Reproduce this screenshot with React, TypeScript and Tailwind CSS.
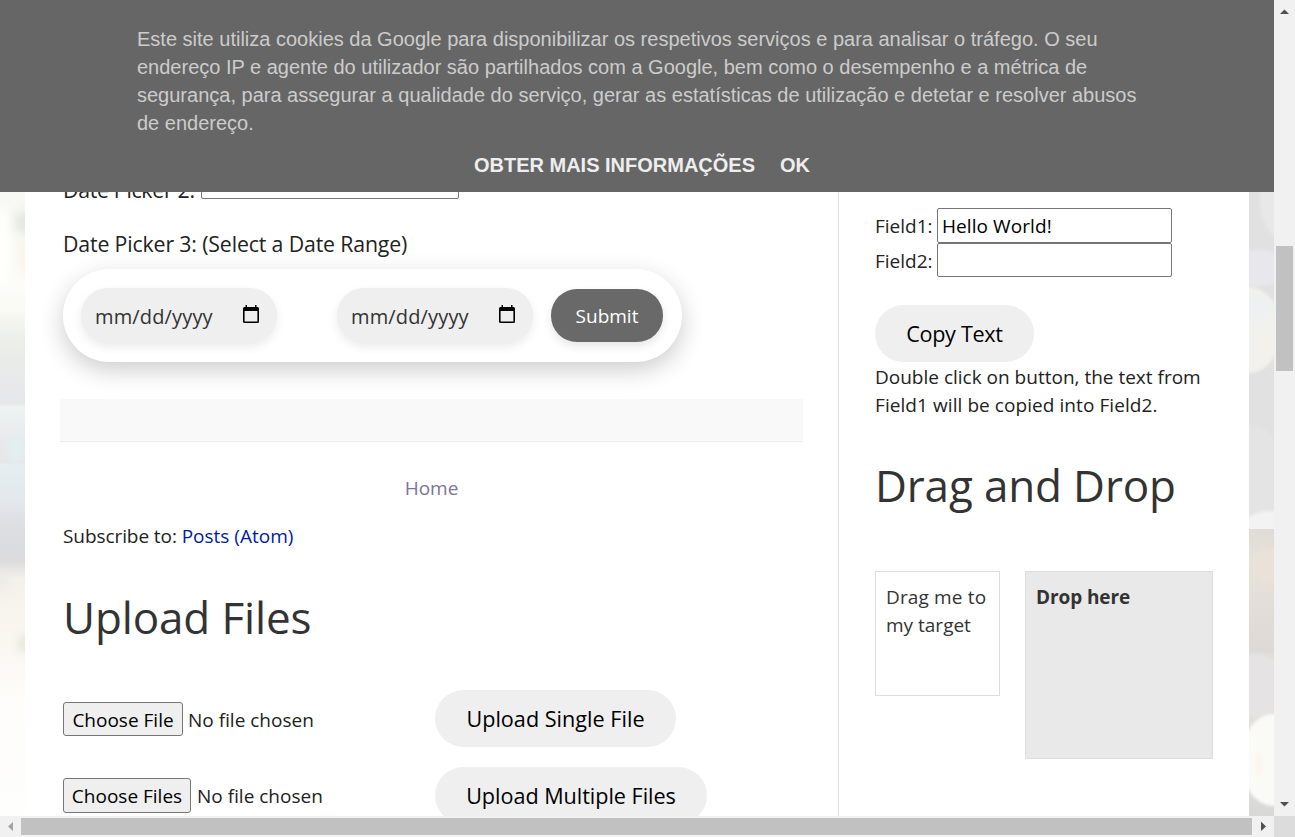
import React from 'react';

const SANS = "font-['Open_Sans','Noto_Sans',sans-serif]";

function CalendarIcon() {
  return (
    <svg width="16" height="18" viewBox="0 0 16 18" fill="none">
      <path d="M2.500 0H4v2h8V0h1.500v2H14.500Q16 2 16 3.500v13q0 1.500-1.500 1.500h-13Q0 18 0 16.500v-13Q0 2 1.500 2h1z M1.600 6v10.400h12.800V6z" fill="#000" fillRule="evenodd" />
    </svg>
  );
}

function DateField() {
  return (
    <div className="flex h-[55px] w-[196px] items-center justify-between rounded-[27px] bg-[#efefef] pr-[18px] pl-[14px] shadow-[0_4px_10px_rgba(0,0,0,0.08)]">
      <span className="pt-[2px] text-[20px] tracking-[0.15px] text-[#333]">mm/dd/yyyy</span>
      <span className="-mt-1">
        <CalendarIcon />
      </span>
    </div>
  );
}

function PillButton({ className, children }: { className: string; children: React.ReactNode }) {
  return (
    <button className={`flex h-[57px] items-center justify-center rounded-full bg-[#efefef] pt-[2px] text-[21.6px] text-black ${className}`}>
      {children}
    </button>
  );
}

function FileButton({ className, children }: { className: string; children: React.ReactNode }) {
  return (
    <button className={`flex items-center justify-center rounded-[3px] border border-[#767676] bg-[#efefef] pt-[2px] text-[19px] whitespace-nowrap text-black ${className}`}>
      {children}
    </button>
  );
}

function LeftBackdrop() {
  return (
    <svg className="h-full w-[25px] shrink-0" viewBox="0 0 25 624" preserveAspectRatio="none">
      <defs>
        <linearGradient id="leftBase" x1="0" y1="0" x2="0" y2="1">
          <stop offset="0" stopColor="#f8f9f5" />
          <stop offset="0.06" stopColor="#f7f8f2" />
          <stop offset="0.15" stopColor="#fcfcf8" />
          <stop offset="0.19" stopColor="#f9faf3" />
          <stop offset="0.23" stopColor="#edefea" />
          <stop offset="0.27" stopColor="#e9ebe8" />
          <stop offset="0.32" stopColor="#e8e8eb" />
          <stop offset="0.338" stopColor="#e4e8e8" />
          <stop offset="0.345" stopColor="#edf3f2" />
          <stop offset="0.4" stopColor="#e9e9eb" />
          <stop offset="0.434" stopColor="#e7e6e9" />
          <stop offset="0.436" stopColor="#e5eef1" />
          <stop offset="0.5" stopColor="#e2e7eb" />
          <stop offset="0.53" stopColor="#dddfe3" />
          <stop offset="0.59" stopColor="#dbdbdd" />
          <stop offset="0.62" stopColor="#f3f1eb" />
          <stop offset="0.7" stopColor="#faf5ef" />
          <stop offset="0.8" stopColor="#fdfcf9" />
          <stop offset="1" stopColor="#fefefd" />
        </linearGradient>
        <filter id="leftSoft" filterUnits="userSpaceOnUse" x="-30" y="-30" width="90" height="690">
          <feGaussianBlur stdDeviation="5" />
        </filter>
      </defs>
      <rect width="25" height="624" fill="url(#leftBase)" />
      <g filter="url(#leftSoft)">
        <ellipse cx="26" cy="30" rx="12" ry="12" fill="#e5e8e1" />
        <ellipse cx="26" cy="66" rx="5" ry="18" fill="#fdf2e8" />
        <ellipse cx="2" cy="55" rx="9" ry="40" fill="#fffffc" />
        <ellipse cx="16" cy="258" rx="8" ry="14" fill="#dff0f1" />
        <ellipse cx="2" cy="390" rx="5" ry="10" fill="#e9eae7" />
        <ellipse cx="26" cy="452" rx="9" ry="9" fill="#e4e9d8" />
      </g>
    </svg>
  );
}

function RightBackdrop() {
  return (
    <svg className="h-full w-[25px] shrink-0" viewBox="0 0 25 624" preserveAspectRatio="none">
      <defs>
        <linearGradient id="rightLow" x1="0" y1="0" x2="0" y2="1">
          <stop offset="0" stopColor="#dfdbd6" />
          <stop offset="0.12" stopColor="#e8e2da" />
          <stop offset="0.42" stopColor="#ded9d5" />
          <stop offset="0.46" stopColor="#e4e2df" />
          <stop offset="0.7" stopColor="#e2dfdb" />
          <stop offset="1" stopColor="#d8d9d7" />
        </linearGradient>
        <filter id="rightSoft" filterUnits="userSpaceOnUse" x="-40" y="-50" width="110" height="720">
          <feGaussianBlur stdDeviation="1.8" />
        </filter>
        <clipPath id="rightTop">
          <rect width="25" height="337" />
        </clipPath>
        <clipPath id="rightBottom">
          <rect y="337" width="25" height="287" />
        </clipPath>
      </defs>
      <rect width="25" height="337" fill="#e1e1e1" />
      <g clipPath="url(#rightTop)">
        <g filter="url(#rightSoft)">
          <ellipse cx="33" cy="8" rx="22" ry="38" fill="#e8e8e8" />
          <ellipse cx="8" cy="76" rx="32" ry="18" fill="#e8e8ec" />
          <ellipse cx="0" cy="138" rx="32" ry="43" fill="#f1f1ed" />
          <ellipse cx="10" cy="116" rx="13" ry="12" fill="#eff0f1" />
          <ellipse cx="14" cy="156" rx="8" ry="10" fill="#f4f1eb" />
          <ellipse cx="3" cy="290" rx="35" ry="56" fill="#e4e4e4" />
          <ellipse cx="20" cy="338" rx="26" ry="19" fill="#f2f3f2" />
        </g>
      </g>
      <rect y="337" width="25" height="287" fill="url(#rightLow)" />
      <g clipPath="url(#rightBottom)">
        <g filter="url(#rightSoft)">
          <ellipse cx="26" cy="374" rx="24" ry="18" fill="#eae2d9" />
          <ellipse cx="8" cy="494" rx="26" ry="32" fill="#e5e3e3" />
          <ellipse cx="24" cy="568" rx="32" ry="46" fill="#fafbf7" />
          <ellipse cx="10" cy="572" rx="4" ry="12" fill="#fcf5ed" />
        </g>
      </g>
    </svg>
  );
}

function CookieBanner() {
  return (
    <div className="flex h-[192px] shrink-0 flex-col items-center bg-[#666] font-['Liberation_Sans',Arial,sans-serif] text-[20px] leading-[28px]">
      <p className="mt-[25px] w-[1000px] whitespace-nowrap text-[#ccc]">
        Este site utiliza cookies da Google para disponibilizar os respetivos serviços e para analisar o tráfego. O seu
        <br />
        endereço IP e agente do utilizador são partilhados com a Google, bem como o desempenho e a métrica de
        <br />
        segurança, para assegurar a qualidade do serviço, gerar as estatísticas de utilização e detetar e resolver abusos
        <br />
        de endereço.
      </p>
      <div className="mt-[14px] flex gap-[25px] pl-[10px] font-bold text-[#eee]">
        <a>OBTER MAIS INFORMAÇÕES</a>
        <a>OK</a>
      </div>
    </div>
  );
}

function MainColumn() {
  return (
    <main className="w-[813px] shrink-0 pl-[38px] text-[19px] text-[#222]">
      <div className="-mt-[27px] flex h-[34px] items-center">
        <span className="mt-[15px] w-[138px] text-[21.3px] tracking-[-0.3px]">Date Picker 2:</span>
        <div className="h-[34px] w-[258px] rounded-[2px] border border-[#767676] bg-white" />
      </div>
      <div className="mt-[31px] h-7 text-[21.3px] leading-7 tracking-[-0.15px]">Date Picker 3: (Select a Date Range)</div>
      <div className="mt-[11px] flex h-[93px] w-[619px] items-center rounded-full bg-white pl-[18px] shadow-[0_8px_25px_rgba(0,0,0,0.2)]">
        <DateField />
        <div className="w-[60px]" />
        <DateField />
        <button className="ml-[18px] flex h-[53px] w-[112px] items-center justify-center rounded-[26px] bg-[#696969] pt-[2px] text-[19px] text-white shadow-[0_4px_10px_rgba(0,0,0,0.1)]">
          Submit
        </button>
      </div>
      <div className="mt-[37px] -ml-[3px] h-[43px] w-[743px] border-b border-[#eee] bg-[#f9f9f9]" />
      <div className="mt-[32px] w-[737px] text-center leading-7 text-[#7c7599]">Home</div>
      <div className="mt-[20px] leading-7 tracking-[-0.08px] whitespace-nowrap">
        <span>Subscribe to: </span>
        <a className="tracking-normal text-[#00209f]">Posts (Atom)</a>
      </div>
      <h2 className="mt-[37px] h-[60px] text-[44px] leading-[60px] tracking-[-0.14px] text-[#333]">Upload Files</h2>
      <div className="mt-[43px] flex h-[57px] items-center">
        <div className="flex w-[372px] items-center gap-[5px] pt-px">
          <FileButton className="h-[34px] w-[120px]">Choose File</FileButton>
          <span className="pt-[2px]">No file chosen</span>
        </div>
        <PillButton className="w-[241px] tracking-[0.02px]">Upload Single File</PillButton>
      </div>
      <div className="mt-5 flex h-[57px] items-center">
        <div className="flex w-[372px] items-center gap-[6px]">
          <FileButton className="h-[35px] w-[128px]">Choose Files</FileButton>
          <span className="pt-[2px]">No file chosen</span>
        </div>
        <PillButton className="w-[272px] tracking-[-0.03px]">Upload Multiple Files</PillButton>
      </div>
    </main>
  );
}

function SideColumn() {
  return (
    <aside className="w-[411px] shrink-0 border-l border-[#ddd] pt-4 pl-[36px] text-[19px] text-[#222]">
      <div className="flex h-[35px] items-center">
        <span className="w-[62px] pt-[2px]">Field1:</span>
        <div className="flex h-[35px] w-[235px] items-center rounded-[2px] border border-[#767676] bg-white pt-[2px] pl-1 text-black tracking-[0.08px]">
          Hello World!
        </div>
      </div>
      <div className="flex h-[34px] items-center">
        <span className="w-[62px] pt-[2px]">Field2:</span>
        <div className="h-[34px] w-[235px] rounded-[2px] border border-[#767676] bg-white" />
      </div>
      <PillButton className="mt-[28px] w-[159px] tracking-[-0.3px]">Copy Text</PillButton>
      <p className="mt-px leading-7 whitespace-nowrap">
        Double click on button, the text from
        <br />
        <span className="tracking-[0.07px]">Field1 will be copied into Field2.</span>
      </p>
      <h2 className="mt-[36px] h-[60px] text-[44px] leading-[60px] tracking-[-0.15px] text-[#333]">Drag and Drop</h2>
      <div className="mt-[56px] flex items-start gap-[25px] leading-7 text-[#333]">
        <div className="h-[125px] w-[125px] border border-[#ddd] pt-[11px] pl-[10px] whitespace-nowrap">
          <span className="tracking-[0.15px]">Drag me to</span>
          <br />
          my target
        </div>
        <div className="h-[188px] w-[188px] border border-[#ddd] bg-[#e9e9e9] pt-[11px] pl-[10px] font-bold tracking-[-0.1px]">
          Drop here
        </div>
      </div>
    </aside>
  );
}

function VerticalScrollbar() {
  return (
    <div className="flex w-[21px] flex-col items-center bg-[#f1f1f1]">
      <svg width="21" height="21" viewBox="0 0 21 21">
        <path d="M6 14l4.500-4.500L15 14z" fill="#505050" />
      </svg>
      <div className="mt-[225px] h-[125px] w-[17px] bg-[#c1c1c1]" />
      <svg className="mt-auto" width="21" height="21" viewBox="0 0 21 21">
        <path d="M6 7l4.500 4.500L15 7z" fill="#505050" />
      </svg>
    </div>
  );
}

function HorizontalScrollbar() {
  return (
    <div className="flex h-[21px] shrink-0">
      <div className="flex w-[1274px] items-center bg-[#f1f1f1]">
        <svg width="21" height="21" viewBox="0 0 21 21">
          <path d="M13 6L8 10.500L13 15z" fill="#a3a3a3" />
        </svg>
        <div className="h-[17px] w-[1231px] bg-[#c1c1c1]" />
        <svg width="21" height="21" viewBox="0 0 21 21">
          <path d="M9 5.500L14 10.500L9 15z" fill="#505050" />
        </svg>
      </div>
      <div className="w-[21px] bg-[#dcdcdc]" />
    </div>
  );
}

export default function App() {
  return (
    <div className={`flex h-[837px] w-[1295px] flex-col overflow-hidden bg-white ${SANS}`}>
      <div className="flex h-[816px] shrink-0">
        <div className="flex w-[1274px] flex-col">
          <CookieBanner />
          <div className="flex h-[624px] overflow-hidden">
            <LeftBackdrop />
            <MainColumn />
            <SideColumn />
            <RightBackdrop />
          </div>
        </div>
        <VerticalScrollbar />
      </div>
      <HorizontalScrollbar />
    </div>
  );
}
